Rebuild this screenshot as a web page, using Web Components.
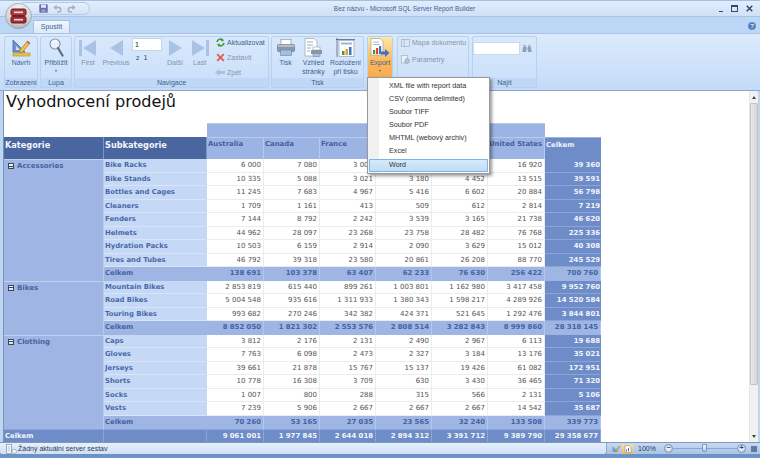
<!DOCTYPE html>
<html lang="cs"><head><meta charset="utf-8"><title>Report Builder</title>
<style>html,body{margin:0;padding:0;background:#bcd5f3;overflow:hidden}body{width:760px;height:458px;font-family:"Liberation Sans",sans-serif}</style>
</head><body>
<rb-app>
  <rb-titlebar title-text="Bez názvu - Microsoft SQL Server Report Builder"></rb-titlebar>
  <rb-tabstrip label="Spustit"></rb-tabstrip>
  <rb-ribbon>
    <rb-group label="Zobrazení" style="width:34px;margin-left:4px">
      <rb-large icon="design" style="width:32px">Návrh</rb-large>
    </rb-group>
    <rb-group label="Lupa" style="width:32px;margin-left:2px">
      <rb-large icon="zoom" arrow style="width:30px">Přiblížit</rb-large>
    </rb-group>
    <rb-group label="Navigace" style="width:195px;margin-left:2px">
      <rb-large icon="first" dim style="width:26px">First</rb-large>
      <rb-large icon="prev" dim style="width:30px">Previous</rb-large>
      <rb-pager></rb-pager>
      <rb-large icon="next" dim style="width:24px">Další</rb-large>
      <rb-large icon="last" dim style="width:25px">Last</rb-large>
      <rb-smalls style="margin-left:3px;gap:4px;padding-top:.5px">
        <rb-small icon="refresh">Aktualizovat</rb-small>
        <rb-small icon="stop" dim>Zastavit</rb-small>
        <rb-small icon="back" dim>Zpět</rb-small>
      </rb-smalls>
    </rb-group>
    <rb-group label="Tisk" style="width:93px;margin-left:2px">
      <rb-large icon="print" style="width:27px">Tisk</rb-large>
      <rb-large icon="preview" style="width:29px">Vzhled<br>stránky</rb-large>
      <rb-large icon="layout" style="width:35px">Rozložení<br>při tisku</rb-large>
    </rb-group>
    <rb-group label="" style="width:26px;margin-left:3px">
      <rb-large icon="export" arrow hot style="width:24px">Export</rb-large>
    </rb-group>
    <rb-group label="" style="width:72px;margin-left:4px">
      <rb-smalls style="margin-left:2px;gap:6px;padding-top:0">
        <rb-small icon="docmap" dim>Mapa dokumentu</rb-small>
        <rb-small icon="params" dim>Parametry</rb-small>
      </rb-smalls>
    </rb-group>
    <rb-group label="Najít" style="width:65px;margin-left:3px">
      <rb-find></rb-find>
    </rb-group>
  </rb-ribbon>
  <rb-viewer>
    <rb-report heading="Vyhodnocení prodejů"></rb-report>
  </rb-viewer>
  <rb-status text="Žádný aktuální server sestav"></rb-status>
  <rb-menu>
    <rb-menuitem>XML file with report data</rb-menuitem>
    <rb-menuitem>CSV (comma delimited)</rb-menuitem>
    <rb-menuitem>Soubor TIFF</rb-menuitem>
    <rb-menuitem>Soubor PDF</rb-menuitem>
    <rb-menuitem>MHTML (webový archiv)</rb-menuitem>
    <rb-menuitem>Excel</rb-menuitem>
    <rb-menuitem active>Word</rb-menuitem>
  </rb-menu>
</rb-app>
<script>
const ICONS = {
 design:`<svg width="19" height="18" viewBox="0 0 19 18"><path d="M1 1 L1 13 L13 13 Z" fill="#6f93cf" stroke="#44659f" stroke-width=".8"/><path d="M4 7 L4 11 L8 11 Z" fill="#d5e3f7"/><path d="M8 11 L15.5 2 L18 4 L10.5 13 L7.5 14 Z" fill="#f0c24b" stroke="#a8762a" stroke-width=".7"/><path d="M15.5 2 L18 4 L17 5 L14.6 3Z" fill="#d0574a"/><rect x="1" y="14" width="17" height="3" fill="#e7c44c" stroke="#a98c2e" stroke-width=".6"/></svg>`,
 zoom:`<svg width="15" height="19" viewBox="0 0 15 19"><circle cx="6" cy="6" r="5" fill="#e8f1fb" stroke="#8094ab" stroke-width="1.1"/><path d="M3 4.5 Q5 2.5 8 3" stroke="#fff" fill="none"/><path d="M9 10 L13.5 17.5" stroke="#5e6b78" stroke-width="2.2" stroke-linecap="round"/></svg>`,
 first:`<svg width="18" height="16" viewBox="0 0 18 16"><rect x="0" y="0" width="3" height="16" fill="#a8c3e3"/><path d="M4 8 L17 0 L17 16 Z" fill="#a8c3e3"/></svg>`,
 prev:`<svg width="13" height="16" viewBox="0 0 13 16"><path d="M0 8 L13 0 L13 16 Z" fill="#a8c3e3"/></svg>`,
 next:`<svg width="13" height="16" viewBox="0 0 13 16"><path d="M13 8 L0 0 L0 16 Z" fill="#a8c3e3"/></svg>`,
 last:`<svg width="18" height="16" viewBox="0 0 18 16"><rect x="15" y="0" width="3" height="16" fill="#a8c3e3"/><path d="M14 8 L1 0 L1 16 Z" fill="#a8c3e3"/></svg>`,
 refresh:`<svg width="9" height="9" viewBox="0 0 9 9" fill="none" stroke="#3f9a3a" stroke-width="1.6"><path d="M1 4 A3.4 3.4 0 0 1 7 2.4"/><path d="M8 5 A3.4 3.4 0 0 1 2 6.6"/><path d="M6 .3 L8 3 L5 3.2Z" fill="#3f9a3a" stroke="none"/><path d="M3 8.7 L1 6 L4 5.8Z" fill="#3f9a3a" stroke="none"/></svg>`,
 stop:`<svg width="9" height="9" viewBox="0 0 9 9"><path d="M1.2 1.2 L7.8 7.8 M7.8 1.2 L1.2 7.8" stroke="#dd5f4f" stroke-width="1.9"/></svg>`,
 back:`<svg width="10" height="9" viewBox="0 0 10 9"><path d="M0 4.5 L4.5 1 V3 H10 V6 H4.5 V8 Z" fill="#a9c2e0"/></svg>`,
 print:`<svg width="18" height="17" viewBox="0 0 18 17"><rect x="4" y="0.5" width="10" height="6" fill="#fff" stroke="#8a98a8" stroke-width=".7"/><rect x="0.5" y="5.5" width="17" height="7" rx="1" fill="#8d99a6" stroke="#5f6b78" stroke-width=".6"/><rect x="0.8" y="5.8" width="16.4" height="2" fill="#b8c2cc"/><rect x="3.5" y="11" width="11" height="5.5" fill="#9fc0e6" stroke="#6f8398" stroke-width=".6"/></svg>`,
 preview:`<svg width="19" height="19" viewBox="0 0 19 19"><path d="M1 .5 H10 L13 3.5 V18 H1 Z" fill="#fff" stroke="#96a3b2" stroke-width=".7"/><path d="M3 4H9M3 7H9M3 10H7M3 13H6" stroke="#8c97a5" stroke-width=".8"/><rect x="7" y="12" width="11" height="4" rx=".6" fill="#8a96a4"/><rect x="9" y="9" width="7" height="3" fill="#fff" stroke="#7e8a98" stroke-width=".5"/><rect x="9" y="15.5" width="7" height="3" fill="#a5c3e6" stroke="#6f8398" stroke-width=".5"/></svg>`,
 layout:`<svg width="20" height="19" viewBox="0 0 20 19"><path d="M1 0V19M0 1.5H19" stroke="#44526a" stroke-width=".7"/><rect x="3" y="2.5" width="15" height="16" fill="#fff" stroke="#96a3b2" stroke-width=".7"/><rect x="5" y="4.5" width="11" height="2" fill="#9fb4cf"/><rect x="6" y="13" width="2.5" height="4" fill="#3f9a3a"/><rect x="9.5" y="11" width="2.5" height="6" fill="#e8a02f"/><rect x="13" y="9" width="2.5" height="8" fill="#3c74c4"/></svg>`,
 export:`<svg width="20" height="20" viewBox="0 0 20 20"><path d="M1 .5H10L13 3.5V17H1Z" fill="#fff" stroke="#96a3b2" stroke-width=".7"/><path d="M3 4H9M3 6.5H10" stroke="#9aa5b3" stroke-width=".8"/><rect x="3" y="12" width="2.2" height="4" fill="#3f9a3a"/><rect x="6" y="10" width="2.2" height="6" fill="#d8472f"/><rect x="9" y="8" width="2.2" height="8" fill="#3c74c4"/><path d="M11 13.5 H15 V11 L19.5 15 L15 19 V16.5 H11Z" fill="#3c74c4"/></svg>`,
 docmap:`<svg width="9" height="8" viewBox="0 0 9 8"><rect x=".5" y=".5" width="8" height="7" fill="#dce7f3" stroke="#9fb0c4" stroke-width=".7"/><path d="M3.2 .5V7.5" stroke="#9fb0c4" stroke-width=".7"/></svg>`,
 params:`<svg width="9" height="9" viewBox="0 0 9 9"><rect x=".5" y=".5" width="6" height="7.5" fill="#eef3f9" stroke="#9fb0c4" stroke-width=".7"/><circle cx="6" cy="6" r="2.4" fill="#b8c4d2" stroke="#8f9fb2" stroke-width=".6"/></svg>`,
 binoc:`<svg width="10" height="9" viewBox="0 0 10 9"><path d="M1.5 1H3.8V3.5H1.5ZM6.2 1H8.5V3.5H6.2Z" fill="#9fb0c6"/><path d="M.3 8 L1.2 3H4.2V8ZM5.8 8V3H8.8L9.7 8Z" fill="#8aa0ba"/><rect x="4.2" y="3.5" width="1.6" height="2" fill="#9fb0c6"/></svg>`,
 save:`<svg width="9" height="9" viewBox="0 0 9 9"><rect x=".3" y=".3" width="8.4" height="8.4" rx=".8" fill="#6a6cae"/><rect x="2" y=".6" width="5" height="3.2" fill="#dfe6f6"/><rect x="2.4" y="5.4" width="4.2" height="3.2" fill="#9a9ed0"/></svg>`,
 undo:`<svg width="9" height="9" viewBox="0 0 9 9" fill="none"><path d="M2 3.5 H5.5 A2.2 2.2 0 0 1 5.5 8 H4" stroke="#9fb1c7" stroke-width="1.5"/><path d="M3.6 .8V6L.4 3.4Z" fill="#9fb1c7"/></svg>`,
 redo:`<svg width="9" height="9" viewBox="0 0 9 9" fill="none"><path d="M7 3.5 H3.5 A2.2 2.2 0 0 0 3.5 8 H5" stroke="#9fb1c7" stroke-width="1.5"/><path d="M5.4 .8V6L8.6 3.4Z" fill="#9fb1c7"/></svg>`,
 orb:`<svg width="27" height="26" viewBox="0 0 27 26"><defs><radialGradient id="o" cx=".5" cy=".25" r=".85"><stop offset="0" stop-color="#f6f6f6"/><stop offset=".65" stop-color="#d2d2d2"/><stop offset="1" stop-color="#9a9a9a"/></radialGradient></defs><ellipse cx="13.5" cy="13" rx="13" ry="12.6" fill="url(#o)" stroke="#93a6be" stroke-width=".8"/><rect x="6" y="6" width="15" height="6.6" rx="1.8" fill="#b5353f" stroke="#5f1a22" stroke-width="1"/><rect x="6" y="13.4" width="15" height="6.6" rx="1.8" fill="#a82c37" stroke="#5f1a22" stroke-width="1"/><path d="M9 9.3H18" stroke="#efd8d8" stroke-width="1.6"/><path d="M9 16.7H18" stroke="#efd8d8" stroke-width="1.6"/></svg>`,
 status:`<svg width="11" height="10" viewBox="0 0 11 10"><rect x=".5" y=".5" width="5" height="9" fill="#fff" stroke="#7f8ea2" stroke-width=".7"/><path d="M1.5 3H4.5M1.5 5H4.5M1.5 7H4.5" stroke="#7f8ea2" stroke-width=".6"/><circle cx="8.2" cy="7.4" r="2.3" fill="#eef3fa" stroke="#7f8ea2" stroke-width=".6"/></svg>`,
 vdesign:`<svg width="8" height="8" viewBox="0 0 8 8"><path d="M.5 1V7H6.5Z" fill="#7f9bc9"/><path d="M3 6 L7 1 L7.8 1.7 L4 7Z" fill="#dcae3d" stroke="#8d6b20" stroke-width=".3"/></svg>`,
 vrun:`<svg width="8" height="8" viewBox="0 0 8 8"><path d="M1 .5H5L7 2.5V7.5H1Z" fill="#fff" stroke="#7d8ea5" stroke-width=".6"/><rect x="2" y="4.5" width="1" height="2" fill="#3c74c4"/><rect x="4" y="3" width="1" height="3.5" fill="#3c74c4"/></svg>`
};
function shadow(el, html){ const r = el.attachShadow({mode:'open'}); r.innerHTML = html; return r; }
const def = (n, c) => customElements.define(n, c);

def('rb-icon', class extends HTMLElement { connectedCallback(){ if(this.shadowRoot) return; shadow(this, `<style>:host{display:inline-flex;align-items:center;justify-content:center;line-height:0}</style>${ICONS[this.getAttribute('name')]||''}`); } });

def('rb-app', class extends HTMLElement { connectedCallback(){ shadow(this, `<style>:host{display:flex;flex-direction:column;position:relative;width:760px;height:458px;overflow:hidden;background:#bcd5f3;font-family:"Liberation Sans",sans-serif;font-size:7px;color:#3e5f90}</style><slot></slot>`); } });

def('rb-titlebar', class extends HTMLElement { connectedCallback(){ const t=this.getAttribute('title-text'); shadow(this, `<style>
 :host{display:flex;align-items:center;flex:none;height:17px;box-sizing:border-box;position:relative;border-top:1px solid #a5c0e2;border-bottom:1px solid #a9c3e4;background:linear-gradient(#e2edfb,#cfe0f7);}
 .orb{position:absolute;left:5px;top:2px;z-index:3}
 .qat{flex:none;margin-left:22px;width:68px;height:13px;box-sizing:border-box;border:1px solid #b4cbe8;border-left:0;border-radius:0 7px 7px 0;background:linear-gradient(#e6f0fc,#d3e3f8);display:flex;align-items:center;gap:5px;padding-left:17px}
 .t{flex:1;text-align:center;color:#3f6598;font-size:6.5px}
 .w{flex:none;display:flex;align-items:center;gap:8px;padding-right:7px}
 .w span{display:block}.min{width:4px;height:1px;background:#33486a;margin-top:6px}
 .max{width:5px;height:4px;border:1px solid #33486a;border-top-width:2px}
 svg{display:block}
 </style><rb-icon class="orb" name="orb"></rb-icon><div class="qat"><rb-icon name="save"></rb-icon><rb-icon name="undo"></rb-icon><rb-icon name="redo"></rb-icon></div><div class="t">${t}</div><div class="w"><span class="min"></span><span class="max"></span><svg width="7" height="7" viewBox="0 0 7 7"><path d="M.7 .7L6.3 6.3M6.3 .7L.7 6.3" stroke="#33486a" stroke-width="1.5"/></svg></div>`); } });

def('rb-tabstrip', class extends HTMLElement { connectedCallback(){ shadow(this, `<style>
 :host{display:flex;flex:none;height:16px;box-sizing:border-box;padding-left:33px;align-items:flex-end;background:#bcd6f6;position:relative}
 .tab{width:37px;height:13px;box-sizing:border-box;background:linear-gradient(#eff6fe,#dbe9fb);border:1px solid #a6c0e2;border-bottom:0;border-radius:2px 2px 0 0;text-align:center;font-size:7px;line-height:12px;color:#3e5f90}
 .help{position:absolute;right:4px;top:5px;width:8px;height:8px;border-radius:50%;background:radial-gradient(#2c5fa8,#7ea5d8);color:#fff;font-size:6px;line-height:8px;text-align:center;font-weight:bold}
 </style><div class="tab">${this.getAttribute('label')}</div><div class="help">?</div>`); } });

def('rb-ribbon', class extends HTMLElement { connectedCallback(){ shadow(this, `<style>
 :host{display:flex;flex:none;height:58px;box-sizing:border-box;padding-top:2px;background:linear-gradient(#dcebfc,#c3dbf8);border-top:1px solid #a9c4e6;border-bottom:1px solid #8ea7c6;position:relative}
 </style><slot></slot>`); } });

def('rb-group', class extends HTMLElement { connectedCallback(){ shadow(this, `<style>
 :host{display:flex;flex-direction:column;flex:none;box-sizing:border-box;height:52px;border:1px solid #b8d1f0;border-radius:2px;background:linear-gradient(#d9e9fc,#c9def9)}
 .c{display:flex;flex:1;min-height:0;justify-content:flex-start}
 .l{flex:none;height:9px;background:#c0d7f5;text-align:center;font-size:7px;line-height:10px;color:#3e5f90}
 </style><div class="c"><slot></slot></div><div class="l">${this.getAttribute('label')}</div>`); } });

def('rb-large', class extends HTMLElement { connectedCallback(){ const dim=this.hasAttribute('dim'),hot=this.hasAttribute('hot'); shadow(this, `<style>
 :host{display:flex;flex-direction:column;align-items:center;flex:none;box-sizing:border-box;text-align:center;font-size:7px;line-height:9px;color:${dim?'#7f95b3':'#3e5f90'};${hot?'background:linear-gradient(#fde6a6,#fbb75a 50%,#f8a24a);height:50px;':''}}
 .i{height:19px;margin-top:1px;display:flex;align-items:center;justify-content:center;flex:none}
 .t{margin-top:1px;white-space:nowrap}
 .a{width:0;height:0;border:1.5px solid transparent;border-top:2px solid #3e5f90;border-bottom:0;margin-top:3px}
 </style><div class="i"><rb-icon name="${this.getAttribute('icon')}"></rb-icon></div><div class="t"><slot></slot></div>${this.hasAttribute('arrow')?'<div class="a"></div>':''}`); } });

def('rb-smalls', class extends HTMLElement { connectedCallback(){ shadow(this, `<style>:host{display:flex;flex-direction:column;flex:none;align-items:flex-start}</style><slot></slot>`); } });

def('rb-small', class extends HTMLElement { connectedCallback(){ shadow(this, `<style>
 :host{display:flex;align-items:center;gap:2px;height:11px;font-size:7px;white-space:nowrap;color:${this.hasAttribute('dim')?'#8496ae':'#3e5f90'}}
 rb-icon{width:10px;flex:none}
 </style><rb-icon name="${this.getAttribute('icon')}"></rb-icon><slot></slot>`); } });

def('rb-pager', class extends HTMLElement { connectedCallback(){ shadow(this, `<style>
 :host{display:flex;flex-direction:column;align-items:flex-start;flex:none;width:32px;padding:1px 0 0 1px;box-sizing:border-box}
 .b{width:30px;height:13px;box-sizing:border-box;background:#fff;border:1px solid #c3d6ec;font-size:7px;line-height:11px;padding-left:2px;color:#222}
 .z{margin:3px 0 0 4px;font-size:6.5px;line-height:8px;color:#2d3f5c;word-spacing:2px;font-family:"DejaVu Sans",sans-serif}
 </style><div class="b">1</div><div class="z">z 1</div>`); } });

def('rb-find', class extends HTMLElement { connectedCallback(){ shadow(this, `<style>
 :host{display:flex;align-items:center;gap:2px;padding:5px 0 0 0;height:13px}
 .b{width:47px;height:13px;box-sizing:border-box;background:#fff;border:1px solid #c6d9ef}
 </style><div class="b"></div><rb-icon name="binoc"></rb-icon>`); } });

def('rb-viewer', class extends HTMLElement { connectedCallback(){ shadow(this, `<style>
 :host{display:flex;flex:none;height:351px;box-sizing:border-box;margin:0 2px 0 3px;background:#fff;border-left:1px solid #7c93b0;}
 .m{flex:1;min-width:0;overflow:hidden}
 .s{flex:none;width:9px;display:flex;flex-direction:column;align-items:center;background:#f1f1f1;border-left:1px solid #e6e6e6;box-sizing:border-box}
 .u,.d{flex:none;height:12px;width:100%;display:flex;align-items:center;justify-content:center}
 .ar{width:0;height:0;border-left:2.5px solid transparent;border-right:2.5px solid transparent}
 .u .ar{border-bottom:3px solid #444}.d .ar{border-top:3px solid #444}
 .th{flex:none;width:100%;height:282px;background:linear-gradient(90deg,#e9e9e9,#d4d4d4);border:1px solid #c4c4c4;box-sizing:border-box;border-radius:1px}
 .g{flex:1}
 </style><div class="m"><slot></slot></div><div class="s"><div class="u"><div class="ar"></div></div><div class="th"></div><div class="g"></div><div class="d"><div class="ar"></div></div></div>`); } });

const ROWS = [
 ['Accessories',[
  ['Bike Racks','6 000','7 080','3 009','3 175','3 176','16 920','39 360'],
  ['Bike Stands','10 335','5 088','3 021','3 180','4 452','13 515','39 591'],
  ['Bottles and Cages','11 245','7 683','4 967','5 416','6 602','20 884','56 798'],
  ['Cleaners','1 709','1 161','413','509','612','2 814','7 219'],
  ['Fenders','7 144','8 792','2 242','3 539','3 165','21 738','46 620'],
  ['Helmets','44 962','28 097','23 268','23 758','28 482','76 768','225 336'],
  ['Hydration Packs','10 503','6 159','2 914','2 090','3 629','15 012','40 308'],
  ['Tires and Tubes','46 792','39 318','23 580','20 861','26 208','88 770','245 529']],
  ['138 691','103 378','63 407','62 233','76 630','256 422','700 760']],
 ['Bikes',[
  ['Mountain Bikes','2 853 819','615 440','899 261','1 003 801','1 162 980','3 417 458','9 952 760'],
  ['Road Bikes','5 004 548','935 616','1 311 933','1 380 343','1 598 217','4 289 926','14 520 584'],
  ['Touring Bikes','993 682','270 246','342 382','424 371','521 645','1 292 476','3 844 801']],
  ['8 852 050','1 821 302','2 553 576','2 808 514','3 282 843','8 999 860','28 318 145']],
 ['Clothing',[
  ['Caps','3 812','2 176','2 131','2 490','2 967','6 113','19 688'],
  ['Gloves','7 763','6 098','2 473','2 327','3 184','13 176','35 021'],
  ['Jerseys','39 661','21 878','15 767','15 137','19 426','61 082','172 951'],
  ['Shorts','10 778','16 308','3 709','630','3 430','36 465','71 320'],
  ['Socks','1 007','800','288','315','566','2 131','5 106'],
  ['Vests','7 239','5 906','2 667','2 667','2 667','14 542','35 687']],
  ['70 260','53 165','27 035','23 565','32 240','133 508','339 773']]
];
const TOTAL=['9 061 001','1 977 845','2 644 018','2 894 312','3 391 712','9 389 790','29 358 677'];
const COUNTRIES=['Australia','Canada','France','Germany','United Kingdom','United States'];
def('rb-report', class extends HTMLElement { connectedCallback(){
 let h='';
 h+=`<div class="blank" style="grid-column:1/3;grid-row:1"></div><div class="band" style="grid-column:3/9;grid-row:1"></div><div class="blank" style="grid-column:9;grid-row:1"></div>`;
 h+=`<div class="hd" style="grid-column:1;grid-row:2">Kategorie</div><div class="hd" style="grid-column:2;grid-row:2">Subkategorie</div>`;
 COUNTRIES.forEach(c=>h+=`<div class="ch">${c}</div>`);
 h+=`<div class="ct">Celkem</div>`;
 ROWS.forEach(([cat,subs,tot])=>{
  h+=`<div class="cat" style="grid-row:span ${subs.length+1}"><span class="box"></span>${cat}</div>`;
  subs.forEach(r=>{
   h+=`<div class="sub">${r[0]}</div>`;
   r.slice(1,7).forEach(v=>h+=`<div class="n">${v}</div>`);
   h+=`<div class="tt">${r[7]}</div>`;
  });
  h+=`<div class="sl">Celkem</div>`;
  tot.forEach(v=>h+=`<div class="sn">${v}</div>`);
 });
 h+=`<div class="gl">Celkem</div><div class="gl"></div>`;
 TOTAL.forEach(v=>h+=`<div class="gn">${v}</div>`);
 shadow(this, `<style>
 :host{display:block;font-family:"DejaVu Sans",sans-serif;color:#444}
 h1{margin:0;height:32px;font-weight:normal;font-size:16.1px;line-height:20px;color:#111;padding:1px 0 0 2px;box-sizing:border-box}
 .g{display:grid;grid-template-columns:100px 103px 57px 56px 56px 56px 56px 57px 56px;grid-template-rows:14px 22px;grid-auto-rows:13.5px;width:597px;font-size:7px;line-height:13.5px}
 .g>div{box-sizing:border-box;min-width:0;white-space:nowrap;overflow:hidden}
 .band{background:#9cb4e3;border-top:1px solid #b7caea}
 .hd{background:#4a66a0;color:#f2f5fb;font-weight:bold;font-size:8.2px;padding:2px 0 0 1px;line-height:13px;border-right:1px solid #7f96c4}
 .g>.ch{background:#9cb4e3;color:#42609c;font-weight:bold;font-size:6.9px;padding:2px 0 0 1px;border:1px solid #b9cbec;border-width:1px 1px 0 0;line-height:9px;white-space:normal}
 .ct{background:#6e8dc8;color:#eef2fa;font-weight:bold;font-size:6.9px;padding:2px 0 0 1px;border-top:1px solid #9cb4e3;line-height:10px}
 .cat{background:#9fb6e4;color:#45639f;font-weight:bold;font-size:7px;padding:1px 0 0 4px;border-top:1px solid #c1d2f0;border-right:1px solid #b9cbec;display:flex;align-items:flex-start;line-height:11px}
 .box{flex:none;width:6px;height:6px;box-sizing:border-box;border:1px solid #39465e;background:linear-gradient(#fff,#d8dce4);margin:2px 3px 0 0;position:relative}
 .box::after{content:"";position:absolute;left:0;right:0;top:1.5px;height:1px;background:#39465e}
 .sub{background:#c5d9f7;color:#4a68a6;font-weight:bold;font-size:6.85px;padding-left:1px;border-bottom:1px solid #d7e4f9}
 .n{background:#fff;color:#555;text-align:right;padding-right:2px;border-bottom:1px solid #ececec;border-right:1px solid #ececec}
 .tt{background:#6e8dc8;color:#f2f5fb;font-weight:bold;text-align:right;padding-right:1px;font-size:6.9px;border-bottom:1px solid #8aa5d6}
 .sl{background:#9fb6e4;color:#45639f;font-weight:bold;font-size:6.85px;padding-left:1px}
 .sn{background:#9fb6e4;color:#45639f;font-weight:bold;text-align:right;padding-right:2px;font-size:6.9px;border-right:1px solid #b4c7ea}
 .gl{background:#6e8dc8;color:#f2f5fb;font-weight:bold;font-size:6.9px;padding-left:1px;border-right:1px solid #8aa5d6;border-top:1px solid #8aa5d6}
 .gn{background:#6e8dc8;color:#f2f5fb;font-weight:bold;text-align:right;padding-right:2px;font-size:6.9px;border-right:1px solid #8aa5d6;border-top:1px solid #8aa5d6}
 </style><h1>${this.getAttribute('heading')}</h1><div class="g">${h}</div>`);
} });

def('rb-status', class extends HTMLElement { connectedCallback(){ shadow(this, `<style>
 :host{display:flex;flex:none;height:16px;box-sizing:border-box;border-top:1px solid #7f99bb;background:#6d92c5;padding-bottom:4px;font-size:7px;color:#2b3a52}
 .l{flex:none;width:606px;display:flex;align-items:center;gap:1px;padding-left:6px;box-sizing:border-box;background:linear-gradient(#e6f0fc,#cfe1f8);border-radius:0 0 2px 2px}
 .r{flex:1;display:flex;align-items:center;background:linear-gradient(#c5d9f3,#a9c4e7);border-left:1px solid #8ea9cc;padding-left:4px;gap:0}
 .on{background:linear-gradient(#fde29a,#f9b655);width:11px;height:10px;display:flex;align-items:center;justify-content:center;margin-left:2px}
 .v{width:9px;display:flex;justify-content:center}
 .p{margin-left:5px;width:26px;font-size:7px;color:#2b3a52}
 .zb{flex:none;width:9px;height:9px;border-radius:50%;background:radial-gradient(#fff,#a8c0de);border:1px solid #7f97b8;box-sizing:border-box;font-size:7px;line-height:6px;text-align:center;color:#2d4566;font-weight:bold}
 .sl{flex:none;width:66px;height:1px;background:#8ba6ca;margin:0 -1px;position:relative}
 .th{position:absolute;left:30px;top:-4px;width:5px;height:8px;box-sizing:border-box;background:linear-gradient(#f4f8fd,#b7cbe6);border:1px solid #7f97b8;border-radius:1px 1px 3px 3px}
 .gr{flex:none;margin-left:5px;width:6px;height:6px;background:radial-gradient(circle at 1px 1px,#5f7a9f 1px,transparent 1px) 0 0/2px 2px}
 </style><div class="l"><rb-icon name="status"></rb-icon><span>${this.getAttribute('text')}</span></div><div class="r"><span class="v"><rb-icon name="vdesign"></rb-icon></span><span class="on"><rb-icon name="vrun"></rb-icon></span><span class="p">100%</span><span class="zb">−</span><span class="sl"><span class="th"></span></span><span class="zb">+</span><span class="gr"></span></div>`); } });

def('rb-menu', class extends HTMLElement { connectedCallback(){ shadow(this, `<style>
 :host{position:absolute;left:367px;top:77px;width:123px;box-sizing:border-box;border:1px solid #9a9a9a;background:linear-gradient(90deg,#f1f1f1 0,#f1f1f1 11px,#fff 11px);box-shadow:2px 2px 3px rgba(0,0,0,.4);padding:2px 1px 1px;font-size:7.2px;color:#333;z-index:9}
 </style><slot></slot>`); } });
def('rb-menuitem', class extends HTMLElement { connectedCallback(){ const a=this.hasAttribute('active'); shadow(this, `<style>
 :host{display:block;height:13.1px;box-sizing:border-box;line-height:12px;padding-left:20px;white-space:nowrap;${a?'background:linear-gradient(#d8ebfb,#bcdcf7);box-shadow:inset 0 0 0 1px #7db4e2;border-radius:1px;':''}}
 </style><slot></slot>`); } });
</script>
</body></html>
